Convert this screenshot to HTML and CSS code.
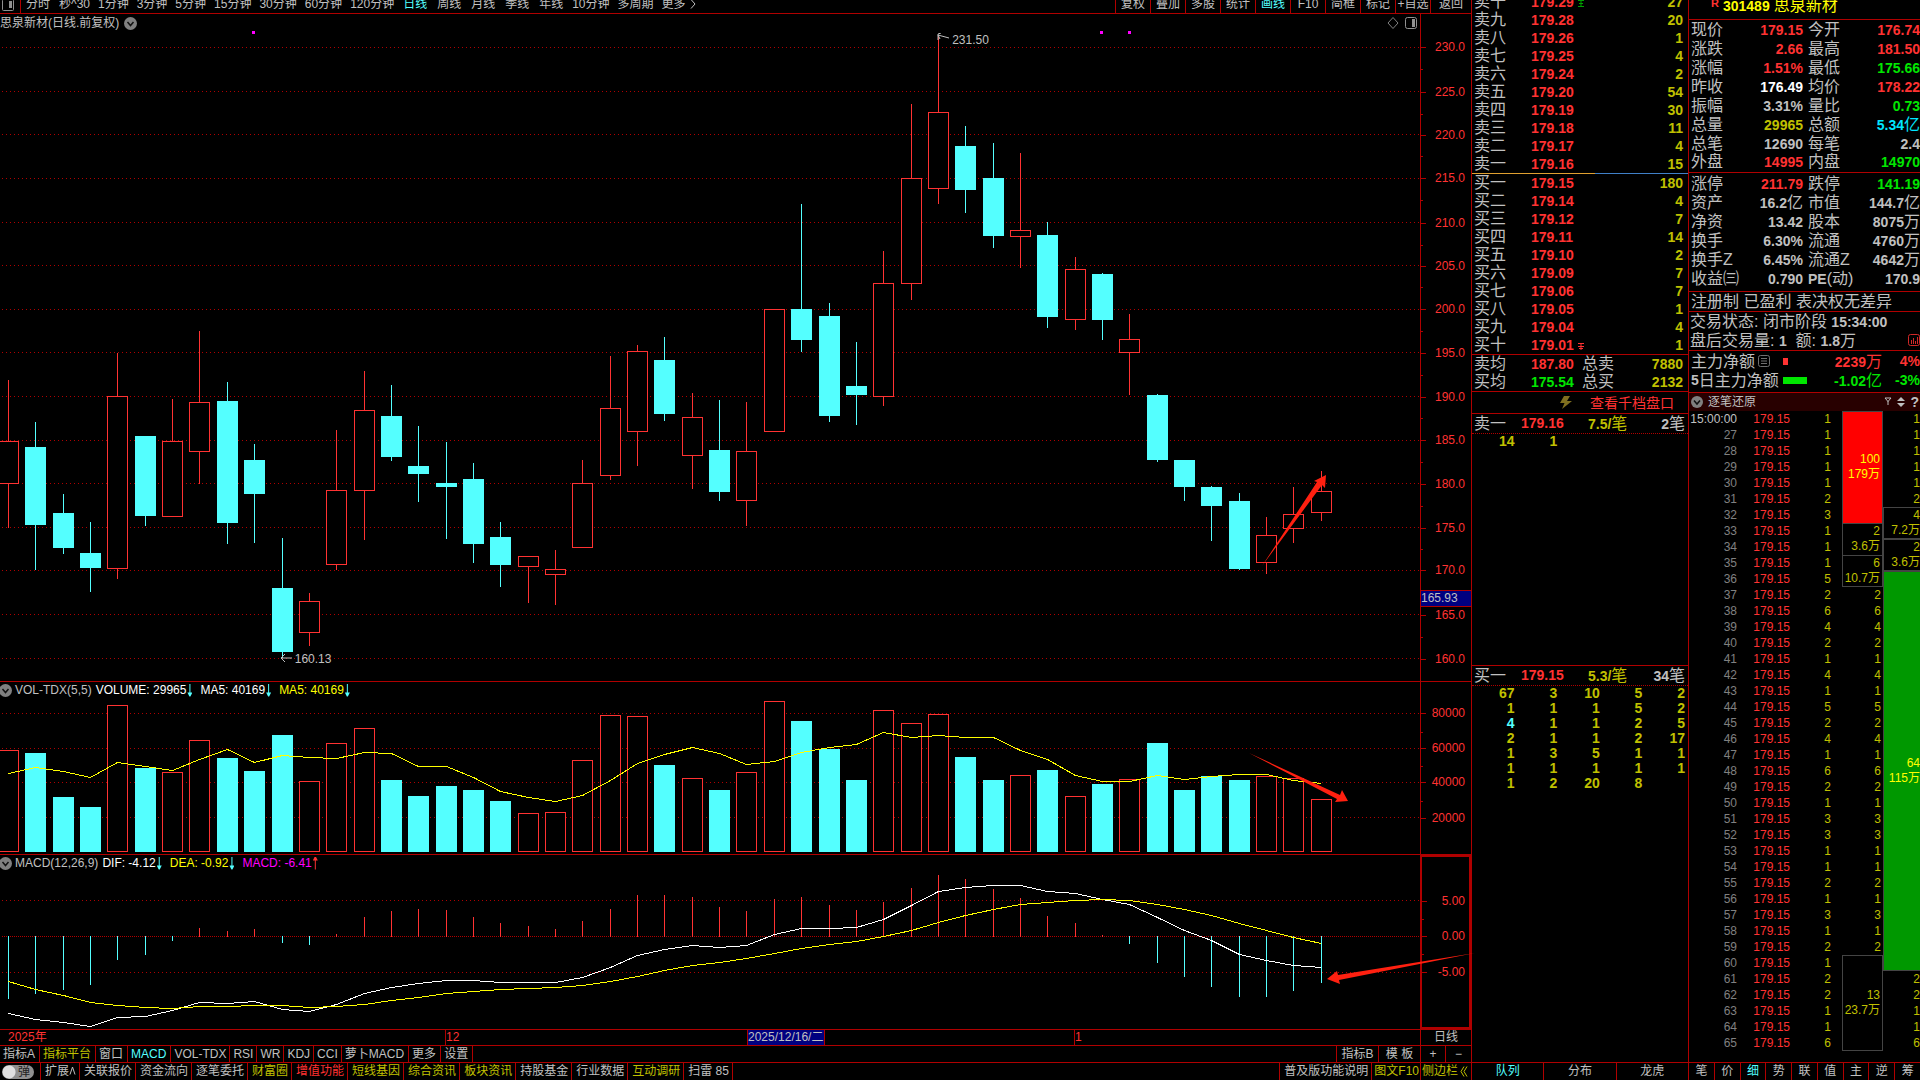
FILE: index.html
```html
<!DOCTYPE html>
<html lang="zh-CN">
<head>
<meta charset="utf-8">
<title>思泉新材 301489 日线</title>
<link rel="stylesheet" href="styles.css">
</head>
<body>
<main class="terminal">
  <section class="chart-area">
    <nav class="topbar">
      <button class="layout-btn" aria-label="布局"><svg width="12" height="12" viewBox="0 0 12 12"><rect x="0.5" y="0.5" width="11" height="11" rx="1" fill="none" stroke="#909090"/><rect x="7" y="2" width="3" height="7" fill="#909090"/></svg></button>
      <div class="periods">
        <button>分时</button><button>秒^30</button><button>1分钟</button><button>3分钟</button><button>5分钟</button><button>15分钟</button><button>30分钟</button><button>60分钟</button><button>120分钟</button><button class="cyan">日线</button><button>周线</button><button>月线</button><button>季线</button><button>年线</button><button>10分钟</button><button>多周期</button><button class="more">更多<svg width="6" height="10" viewBox="0 0 6 10"><path d="M1 0.500L5 5L1 9.500" fill="none" stroke="#c0c0c0"/></svg></button>
      </div>
      <div class="tools">
        <button>复权</button><button>叠加</button><button>多股</button><button>统计</button><button class="cyan">画线</button><button>F10</button><button>简框</button><button>标记</button><button>+自选</button><button class="back">返回</button>
      </div>
    </nav>

    <div class="charts">
      <section class="panel panel-price">
        <div class="plot">
          <svg class="draw" id="price" viewBox="0 14 1420 667" preserveAspectRatio="none"></svg>
          <header class="legend"><span>思泉新材(日线.前复权)</span><svg class="chev" width="13" height="13" viewBox="0 0 13 13"><circle cx="6.500" cy="6.500" r="6.500" fill="#808080"/><path d="M3.500 5L6.500 8.500L9.500 5" fill="none" stroke="#111" stroke-width="1.500"/></svg>
            <span class="corner"><svg width="12" height="12" viewBox="0 0 12 12"><path d="M6 0.500L11 6L6 11.500L1 6Z" fill="none" stroke="#808080"/></svg><svg width="12" height="12" viewBox="0 0 12 12"><rect x="0.500" y="0.500" width="11" height="11" rx="2" fill="none" stroke="#909090"/><rect x="7" y="2" width="3" height="8" fill="#909090"/></svg></span>
          </header>
          <span class="note note-high"><svg width="13" height="8" viewBox="0 0 13 8"><path d="M12 5L1 2M4 0L1 1V7M1 2L3 6" fill="none" stroke="#c0c0c0"/></svg>231.50</span>
          <span class="note note-low"><svg width="13" height="8" viewBox="0 0 13 8"><path d="M12 4H1M5 0L1 4L5 8" fill="none" stroke="#c0c0c0"/></svg>160.13</span>
        </div>
        <div class="axis" id="price-axis"><span class="price-tag">165.93</span></div>
      </section>
      <section class="panel panel-vol">
        <div class="plot">
          <svg class="draw" id="vol" viewBox="0 682 1420 172" preserveAspectRatio="none"></svg>
          <header class="legend sub"><svg class="chev" width="13" height="13" viewBox="0 0 13 13"><circle cx="6.500" cy="6.500" r="6.500" fill="#808080"/><path d="M3.500 5L6.500 8.500L9.500 5" fill="none" stroke="#111" stroke-width="1.500"/></svg><span class="name">VOL-TDX(5,5)</span><span class="white">VOLUME: 29965<i class="down"></i></span><span class="white">MA5: 40169<i class="down"></i></span><span class="yellow">MA5: 40169<i class="down"></i></span></header>
        </div>
        <div class="axis" id="vol-axis"></div>
      </section>
      <section class="panel panel-macd">
        <div class="plot">
          <svg class="draw" id="macd" viewBox="0 855 1420 174" preserveAspectRatio="none"></svg>
          <header class="legend sub"><svg class="chev" width="13" height="13" viewBox="0 0 13 13"><circle cx="6.500" cy="6.500" r="6.500" fill="#808080"/><path d="M3.500 5L6.500 8.500L9.500 5" fill="none" stroke="#111" stroke-width="1.500"/></svg><span class="name">MACD(12,26,9)</span><span class="white">DIF: -4.12<i class="down"></i></span><span class="yellow">DEA: -0.92<i class="down"></i></span><span class="magenta">MACD: -6.41<i class="up"></i></span></header>
        </div>
        <div class="axis framed" id="macd-axis"></div>
      </section>
      <svg class="arrows" viewBox="0 14 1471 1015" preserveAspectRatio="none">
        <path d="M1262 566L1317 482L1314 481L1326 475L1325 488L1322 485Z"/>
        <path d="M1249 753L1340 795L1342 790L1348 801L1335 802L1337 799Z"/>
        <path d="M1475 953L1338 975L1337 971L1327 979L1340 984L1339 980Z"/>
      </svg>
    </div>

    <div class="dates"><span class="d-year">2025年</span><span class="d-dec">12</span><span class="d-cur">2025/12/16/二</span><span class="d-gap"></span><span class="d-jan">1</span><button class="d-period">日线</button></div>

    <nav class="tabs indicators">
      <button>指标A</button><button class="gold">指标平台</button><button>窗口</button><button class="cyan">MACD</button><button class="latin">VOL-TDX</button><button class="latin">RSI</button><button class="latin">WR</button><button class="latin">KDJ</button><button class="latin">CCI</button><button>萝卜MACD</button><button>更多</button><button>设置</button>
      <span class="fill"></span><button class="wide">指标B</button><button class="wide">模 板</button><button class="zoom">+</button><button class="zoom last">−</button>
    </nav>
    <nav class="tabs footer">
      <label class="switch"><input type="checkbox" aria-label="弹"><span>弹</span></label>
      <button>扩展<svg class="caret" width="7" height="9" viewBox="0 0 7 9"><path d="M1 8.500L3.500 1L6 8.500" fill="none" stroke="#c0c0c0"/></svg></button><button>关联报价</button><button>资金流向</button><button>逐笔委托</button><button class="gold">财富圈</button><button class="red">增值功能</button><button class="gold">短线基因</button><button class="gold">综合资讯</button><button class="gold">板块资讯</button><button>持股基金</button><button>行业数据</button><button class="gold">互动调研</button><button>扫雷 85</button>
      <span class="fill"></span><button>普及版功能说明</button><button class="gold f10">图文F10</button><button class="gold side">侧边栏<svg width="8" height="11" viewBox="0 0 8 11"><path d="M4 0.500L1 5.500L4 10.500M7 0.500L4 5.500L7 10.500" fill="none" stroke="#c0c000"/></svg></button>
    </nav>
  </section>

  <section class="book">
    <div class="book-body">
      <table class="levels"><tbody id="asks"></tbody></table>
      <div class="ratio"></div>
      <table class="levels"><tbody id="bids"></tbody></table>
      <table class="levels avg">
        <tr><th>卖均</th><td class="px">187.80</td><td class="lbl">总卖</td><td class="qty">7880</td></tr>
        <tr><th>买均</th><td class="px green">175.54</td><td class="lbl">总买</td><td class="qty">2132</td></tr>
      </table>
      <div class="deep"><svg width="12" height="13" viewBox="0 0 12 13"><path d="M4 0H10L7 5H12L2 13L4.500 7H0Z" fill="#807020"/></svg><a href="#depth">查看千档盘口</a></div>
      <div class="queue queue-ask">
        <div class="q-head"><span>卖一</span><b class="red">179.16</b><span class="gold"><b>7.5/</b>笔</span><span class="cnt"><b>2</b>笔</span></div>
        <div class="q-grid"><b>14</b><b>1</b></div>
      </div>
      <div class="queue queue-bid">
        <div class="q-head"><span>买一</span><b class="red">179.15</b><span class="gold"><b>5.3/</b>笔</span><span class="cnt"><b>34</b>笔</span></div>
        <div class="q-grid" id="bid-queue"></div>
      </div>
    </div>
    <nav class="side-tabs"><button class="cyan">队列</button><button>分布</button><button>龙虎</button></nav>
  </section>

  <aside class="quote">
    <h1 class="stock"><sup>R</sup><b>301489</b><span>思泉新材</span></h1>
    <table class="info first-block"><tbody id="info1"></tbody></table>
    <table class="info second"><tbody id="info2"></tbody></table>
    <p class="flags">注册制 已盈利 表决权无差异</p>
    <div class="status">
      <p>交易状态: 闭市阶段 <b>15:34:00</b></p>
      <p class="after"><span>盘后交易量: <b>1</b> &nbsp;额: <b>1.8</b>万</span><svg width="12" height="12" viewBox="0 0 12 12"><rect x="0.500" y="0.500" width="11" height="11" rx="2" fill="none" stroke="#d02828"/><path d="M3.500 6V10M5.500 4V10M7.500 7V10M9.500 3V10" stroke="#d02828"/></svg></p>
    </div>
    <div class="flow">
      <div class="flow-row red"><span class="f-name">主力净额<svg width="12" height="12" viewBox="0 0 12 12"><rect x="0.500" y="0.500" width="11" height="11" rx="2" fill="none" stroke="#707070"/><path d="M3 3.500H9M3 6H9M3 8.500H9" stroke="#707070"/></svg></span><span class="f-bar"><i class="bar-in"></i></span><span class="f-val"><b>2239</b>万</span><b class="f-pct">4%</b></div>
      <div class="flow-row green"><span class="f-name"><b>5</b>日主力净额</span><span class="f-bar"><i class="bar-out"></i></span><span class="f-val"><b>-1.02</b>亿</span><b class="f-pct">-3%</b></div>
    </div>
    <header class="tick-head"><svg width="12" height="12" viewBox="0 0 12 12"><circle cx="6" cy="6" r="6" fill="#808080"/><path d="M3 4.500L6 8L9 4.500" fill="none" stroke="#111" stroke-width="1.500"/></svg><span>逐笔还原</span>
      <svg width="8" height="9" viewBox="0 0 8 9"><path d="M1 1H7L4 4.500ZM4 4V8" fill="none" stroke="#c0c0c0"/></svg>
      <svg width="8" height="10" viewBox="0 0 8 10"><path d="M0 4L4 0L8 4ZM0 6L4 10L8 6Z" fill="#c0c0c0"/></svg><b>?</b></header>
    <table class="ticks"><tbody id="ticks"></tbody></table>
    <nav class="side-tabs last-tabs"><button>笔</button><button>价</button><button class="cyan">细</button><button>势</button><button>联</button><button>值</button><button>主</button><button>逆</button><button>筹</button></nav>
  </aside>
</main>
<script src="app.js"></script>
</body>
</html>
```
FILE: styles.css
```css
* { box-sizing: border-box; margin: 0; padding: 0; }

:root {
  --line: #b00000;
  --red: #ff3232;
  --cyan: #54ffff;
  --gold: #c0c000;
  --green: #00e600;
  --text: #c0c0c0;
}

body {
  background: #000;
  color: var(--text);
  font: 12px/16px "Liberation Sans", "Noto Sans CJK SC", sans-serif;
  overflow: hidden;
}

button {
  background: none;
  border: 0;
  color: inherit;
  font: inherit;
  white-space: nowrap;
  cursor: pointer;
}

a { color: inherit; text-decoration: none; }
table { border-collapse: collapse; width: 100%; }
th { font-weight: 400; text-align: left; }

.red { color: var(--red); }
.cyan { color: var(--cyan); }
.gold { color: var(--gold); }
.green { color: var(--green); }
.white { color: #fff; }
.yellow { color: #ff0; }
.magenta { color: #f0f; }

.terminal {
  display: grid;
  grid-template-columns: minmax(0, 1fr) 217px 232px;
  height: 100vh;
}

/* left: chart column */
.chart-area { display: flex; flex-direction: column; min-width: 0; }

.topbar {
  display: flex;
  height: 14px;
  line-height: 8px;
  border-bottom: 1px solid var(--line);
}
.topbar button { line-height: 8px; height: 8px; }
.topbar .layout-btn { width: 20px; height: 13px; padding: 0 0 0 2px; text-align: left; }
.layout-btn svg { display: block; margin-top: -4px; }
.periods { display: flex; gap: 8px; flex: 1; border-left: 1px solid var(--line); padding-left: 4px; }
.periods button { min-width: 26px; }
.periods .more { display: flex; gap: 4px; align-items: center; }
.tools { display: flex; }
.topbar .tools button { width: 35px; height: 13px; padding-bottom: 5px; border-left: 1px solid var(--line); }
.topbar .tools .back { width: 41px; }

.charts { flex: 1; display: flex; flex-direction: column; position: relative; min-height: 0; }
.panel { display: flex; min-height: 0; }
.panel-price { flex: 667 1 0; }
.panel-vol { flex: 172 1 0; border-top: 1px solid var(--line); }
.panel-macd { flex: 174 1 0; border-top: 1px solid var(--line); }
.plot { flex: 1; position: relative; min-width: 0; }
.draw { position: absolute; inset: 0; width: 100%; height: 100%; display: block; shape-rendering: crispEdges; }
.arrows { position: absolute; inset: 0; width: 100%; height: 100%; overflow: visible; pointer-events: none; z-index: 2; fill: #ff2010; }

.legend { position: relative; display: flex; align-items: center; gap: 5px; height: 18px; }
.legend.sub { height: 16px; gap: 0; }
.sub .chev { margin-left: -1px; margin-right: 3px; }
.sub .name { margin-right: 4px; }
.sub .white, .sub .yellow, .sub .magenta { display: flex; align-items: center; margin-right: 8px; }
.corner { display: flex; gap: 6px; margin-left: auto; margin-right: 3px; }

.down, .up { width: 5px; height: 13px; margin-left: 1px; background: var(--cyan); clip-path: polygon(2px 0, 3px 0, 3px 9px, 5px 9px, 3px 13px, 2px 13px, 0 9px, 2px 9px); }
.up { background: var(--red); clip-path: polygon(2px 0, 3px 0, 5px 4px, 3px 4px, 3px 13px, 2px 13px, 2px 4px, 0 4px); }

.note { position: absolute; display: flex; gap: 2px; line-height: 12px; }
.note-high { left: 66%; top: 3%; }
.note-low { left: 19.700%; top: 95.800%; }
.note-high svg { margin-top: -1px; }
.note-low svg { margin-top: 1px; }

.axis { width: 51px; position: relative; border-left: 1px solid var(--line); color: var(--red); }
.axis.framed { border: 2px solid var(--line); }
.mark { position: absolute; left: 0; right: 6px; height: 16px; margin-top: -8px; text-align: right; }
.framed .mark { right: 4px; }
.mark::before { content: ""; position: absolute; left: 0; top: 8px; width: 5px; height: 1px; background: var(--line); }
.mark.minor::before { width: 2px; }
.price-tag { position: absolute; left: 0; right: 0; top: 86.400%; height: 17px; line-height: 15px; background: #000080; color: var(--text); border: solid var(--line); border-width: 1px 0; z-index: 1; }

.dates { display: flex; height: 16px; line-height: 15px; border-top: 1px solid var(--line); color: var(--red); }
.d-year { flex: 437 1 0; padding-left: 8px; }
.d-dec { flex: 301 1 0; border-left: 1px solid var(--line); }
.d-cur { flex: 76 1 0; white-space: nowrap; background: #000080; color: var(--text); border: solid var(--line); border-width: 0 1px; }
.d-gap { flex: 249 1 0; }
.d-jan { flex: 345 1 0; border-left: 1px solid var(--line); }
.d-period { flex: none; width: 51px; border-left: 1px solid var(--line); color: var(--text); line-height: 15px; }

.tabs { display: flex; height: 17px; border-top: 1px solid var(--line); }
.tabs button { line-height: 16px; padding: 0 4px 0 3px; border-right: 1px solid var(--line); }
.tabs .latin { padding: 0 3px; }
.fill { flex: 1; border-right: 1px solid var(--line); }
.tabs .wide { width: 42px; padding: 0; }
.tabs .zoom { width: 25px; padding: 0; }
.tabs .last { border-right: 0; }
.tabs.footer { height: 18px; }
.footer button { line-height: 17px; padding: 0 3px 0 4px; }
.footer .f10 { padding: 0 1px 0 2px; }
.footer .side { display: flex; align-items: center; gap: 2px; width: 50px; padding: 0 0 0 1px; border: 0; }
.switch { width: 41px; border-right: 1px solid var(--line); padding: 2px 0 0 2px; position: relative; line-height: 14px; }
.switch input { appearance: none; display: block; width: 32px; height: 14px; border-radius: 7px; background: radial-gradient(circle at 7px 7px, #e0e0e0 6px, #909090 7px); }
.switch span { position: absolute; left: 18px; top: 2px; color: #222; }

/* middle: order book */
.book, .quote { display: flex; flex-direction: column; border-left: 1px solid var(--line); min-height: 0; min-width: 0; overflow: hidden; font-size: 16px; line-height: 18px; }
.book b, .quote b { font-size: 14px; }
.book-body { flex: 1; display: flex; flex-direction: column; margin-top: -7px; }
.levels { table-layout: fixed; }
.levels tr { height: 18px; }
.levels th { width: 50px; padding-left: 2px; }
.levels td { font-size: 14px; font-weight: 700; white-space: nowrap; }
.levels .px { width: 60px; padding-left: 9px; color: var(--red); }
.levels .px.green { color: var(--green); }
.levels .lbl { width: 46px; font-size: 16px; font-weight: 400; }
.levels .qty { color: var(--gold); text-align: right; padding-right: 5px; }
.lim { display: inline-block; vertical-align: middle; margin-left: 4px; }
.ratio { height: 1px; background: linear-gradient(90deg, #e0a030 57%, #4080c8 57%); }
.avg { border-top: 1px solid var(--line); }
.deep { display: flex; align-items: center; justify-content: flex-end; gap: 18px; height: 22px; padding-right: 14px; border-top: 1px solid var(--line); color: var(--red); font-size: 14px; }
.queue { border-top: 1px solid var(--line); }
.queue-ask { flex: 252 1 0; }
.queue-bid { flex: 397 1 0; }
.q-head { display: grid; grid-template-columns: 47px 67px 1fr auto; height: 20px; line-height: 19px; padding: 0 3px 0 2px; border-bottom: 1px dotted var(--line); }
.q-grid { display: grid; grid-template-columns: repeat(5, 1fr); padding-right: 3px; line-height: 15px; grid-auto-rows: 15px; text-align: right; color: var(--gold); }
.side-tabs { display: flex; height: 18px; border-top: 1px solid var(--line); flex: none; font-size: 12px; }
.side-tabs button { flex: 1 1 0; line-height: 17px; border-right: 1px solid var(--line); min-width: 0; }
.side-tabs button:last-child { border-right: 0; }

/* right: quote */
.stock { height: 20px; flex: none; display: flex; gap: 4px; padding-left: 22px; line-height: 12px; font-size: 16px; font-weight: 400; color: #ff0; border-bottom: 1px solid var(--line); }
.stock sup { color: var(--red); font: 700 11px/7px "Liberation Sans", sans-serif; }
.info { table-layout: fixed; }
.info tr { height: 19px; }
.info th, .info td { line-height: 18px; white-space: nowrap; vertical-align: middle; }
.info b, .status b, .f-name b, .f-val b { line-height: 1; }
.info th { width: 48px; padding-left: 2px; }
.info td { text-align: right; }
.info .first { width: 66px; }
.info th.th2 { padding-left: 5px; }
.first-block { border-bottom: 1px solid var(--line); }
.second { margin: 2px 0; }
.info .w { color: #fff; }
.info .c { color: #00e6ff; }
.info .y { color: var(--gold); }
.flags { height: 20px; line-height: 19px; padding-left: 2px; border-top: 1px solid var(--line); white-space: nowrap; }
.status { height: 39px; line-height: 19px; padding-left: 1px; border-top: 1px solid var(--line); white-space: nowrap; }
.status .after { display: flex; align-items: center; justify-content: space-between; }
.flow { height: 42px; line-height: 19px; padding-top: 1px; border-top: 1px solid var(--line); }
.flow-row { display: grid; grid-template-columns: 94px 1fr 60px 38px; white-space: nowrap; align-items: center; height: 19px; }
.f-name { color: var(--text); padding-left: 2px; display: flex; align-items: center; gap: 3px; }
.flow-row:nth-child(2) .f-name { gap: 0; }
.f-bar i { display: block; height: 7px; background: currentColor; }
.bar-in { width: 5px; }
.bar-out { width: 24px; }
.f-val, .f-pct { text-align: right; }
.tick-head { display: flex; align-items: center; height: 19px; gap: 5px; padding: 0 1px 0 2px; background: #280000; border-top: 1px solid var(--line); font-size: 12px; }
.tick-head span { flex: 1; }
.ticks { flex: none; table-layout: fixed; font-size: 12px; border-collapse: separate; border-spacing: 0; }
.ticks tr { height: 16px; }
.ticks td { line-height: 16px; text-align: right; color: var(--gold); white-space: nowrap; }
.ticks .t { width: 48px; color: #808080; }
.ticks .t.full { color: var(--text); }
.ticks .p { width: 53px; color: var(--red); }
.ticks .n { width: 41px; }
.ticks .a { width: 52px; padding-right: 2px; }
.ticks .cell { padding: 0; }
.ticks .cell div { display: flex; flex-direction: column; justify-content: center; padding-right: 2px; line-height: 15px; border: solid #444; border-width: 1px 1px 0; margin-left: 11px; }
.ticks .b.cell div { margin-left: 0; padding-right: 0; border-width: 1px 0 1px 1px; }
.ticks .bottom div { border-bottom-width: 1px; }
.ticks .buy div { background: #f00; color: #ff0; }
.ticks .sell div { background: #009800; color: #ff0; }
.last-tabs { margin-top: auto; }
.quote .side-tabs button { padding: 0; }
```
FILE: app.js
```js
const $ = id => document.getElementById(id);
const RED = '#ff3232', CYAN = '#54ffff', GRID = '#b00000';
const STEP = 27.35;
const cx = i => Math.round(8 + STEP * i);

// kind, high, body top, body bottom, low
const candles = [
  ['r',380,441,483,528],['c',422,447,525,570],['c',494,513,548,554],['c',522,553,568,592],['r',353,396,568,579],
  ['c',436,436,516,526],['r',399,441,516,516],['r',331,402,451,484],['c',382,401,523,544],['c',444,460,494,543],
  ['c',538,588,652,658],['r',593,601,632,646],['r',430,490,564,570],['r',371,410,490,540],['c',385,416,457,461],
  ['c',426,466,474,502],['c',442,483,487,539],['c',463,479,544,563],['c',522,537,565,587],['r',556,556,566,603],
  ['r',550,569,574,605],['r',460,483,547,547],['r',356,408,475,480],['r',345,351,431,466],['c',337,360,414,421],
  ['r',393,417,455,489],['c',400,450,492,501],['r',402,451,500,526],['r',309,309,431,431],['c',204,309,340,352],
  ['c',303,316,416,422],['c',342,386,395,425],['r',251,283,396,406],['r',104,178,283,300],['r',36,112,188,204],
  ['c',126,146,190,213],['c',143,178,236,248],['r',153,230,236,268],['c',222,235,317,328],['r',257,269,319,330],
  ['c',273,274,320,340],['r',314,339,352,395],['c',394,395,460,462],['c',460,460,487,501],['c',486,487,506,541],
  ['c',493,501,569,570],['r',517,535,562,574],['r',487,514,528,543],['r',471,491,512,521]
];
const volume = [750,753,797,807,705,768,772,740,758,771,735,781,743,728,780,796,786,790,801,813,812,760,715,716,765,778,790,772,701,721,749,780,710,723,714,757,780,775,770,796,784,779,743,790,776,780,776,778,799];
const ma5 = [773,767,771,777,762,766,770,759,749,762,755,757,758,752,753,766,766,777,791,797,801,795,780,763,754,747,753,764,761,752,747,744,732,737,735,737,737,750,759,775,781,781,775,779,776,774,774,780,783];
const hist = [999,994,990,985,960,955,941,928,931,929,943,945,934,917,911,909,910,917,923,926,929,921,909,895,895,897,907,911,899,897,905,910,902,888,875,879,889,898,916,923,935,944,963,977,987,997,997,991,983];
const dif = [1013,1019,1022,1026,1017,1016,1010,1002,1003,1001,1009,1011,1004,993,987,983,980,980,982,982,982,977,967,955,949,945,947,945,934,928,928,927,919,905,891,887,885,885,891,893,899,904,917,930,940,954,960,965,967];
const dea = [981,989,995,1002,1005,1007,1008,1006,1006,1005,1005,1007,1006,1004,1000,997,993,991,989,988,987,985,981,976,970,965,962,958,953,948,944,941,936,930,922,915,909,904,902,900,899,900,904,909,915,923,930,937,943];

const vline = (x, a, b, c) => `<path d="M${x + .5} ${a}V${b}" stroke="${c}"/>`;
const hgrid = (y, gap = 3) => `<path d="M2 ${y + .5}H1420" stroke="${GRID}" stroke-dasharray="1 ${gap}"/>`;
const body = (kind, x, a, b) => kind === 'c'
  ? `<rect x="${x - 10}" y="${a}" width="21" height="${b - a}" fill="${CYAN}"/>`
  : `<rect x="${x - 9.5}" y="${a + .5}" width="20" height="${b - a}" fill="#000" stroke="${RED}"/>`;
const curve = (ys, c) => `<polyline points="${ys.map((y, i) => `${cx(i) + .5},${y + .5}`).join(' ')}" fill="none" stroke="${c}"/>`;

const priceYs = [47,91,134,178,222,265,309,352,396,440,483,527,570,614,658];
$('price').innerHTML = priceYs.map(y => hgrid(y)).join('')
  + candles.map(([k, h, t, b, l], i) => vline(cx(i), h, l, k === 'c' ? CYAN : RED) + body(k, cx(i), t, b)).join('')
  + [252, 1100, 1128].map(x => `<rect x="${x}" y="31" width="3" height="3" fill="#f0f"/>`).join('');
$('vol').innerHTML = [713,748,782,817].map(y => hgrid(y)).join('')
  + volume.map((y, i) => body(candles[i][0], cx(i), y, candles[i][0] === 'c' ? 852 : 851)).join('') + curve(ma5, '#ff0');
$('macd').innerHTML = hgrid(900) + hgrid(936, 1) + hgrid(972)
  + hist.map((y, i) => y > 936 ? vline(cx(i), 936, y, CYAN) : vline(cx(i), y, 937, RED)).join('')
  + curve(dif, '#fff') + curve(dea, '#ff0');

// axis marks, placed as a share of the panel height
function axis(id, ys, labels, top, height, minors) {
  const at = y => `style="top:${((y + .5 - top) / height * 100).toFixed(2)}%"`;
  $(id).insertAdjacentHTML('beforeend',
    ys.map((y, i) => `<span class="mark" ${at(y)}>${labels[i]}</span>`).join('')
    + minors.map(y => `<span class="mark minor" ${at(y)}></span>`).join(''));
}
const mids = ys => ys.slice(1).map((y, i) => Math.round((y + ys[i]) / 2));
axis('price-axis', priceYs, priceYs.map((_, i) => (230 - 5 * i).toFixed(1)), 14, 667, mids(priceYs));
axis('vol-axis', [713,748,782,817], ['80000','60000','40000','20000'], 682, 172, [731,765,800]);
axis('macd-axis', [900,936,972], ['5.00','0.00','-5.00'], 857, 170, [918,954]);

// order book
const cn = '一二三四五六七八九十';
const flag = (c, up) => `<svg class="lim" width="6" height="7" viewBox="0 0 6 7"><path d="${up ? 'M0 .5H6M3 0V6M0 6.500H6M1 3.500H5' : 'M0 .5H6M3 0V7M0 3.500H6M1 5.500H5'}" stroke="${c}"/></svg>`;
const level = (side, n, p, q, f = '') => `<tr><th>${side}${cn[n]}</th><td class="px">${p}${f}</td><td class="qty">${q}</td></tr>`;
const asks = [['179.29',27],['179.28',20],['179.26',1],['179.25',4],['179.24',2],['179.20',54],['179.19',30],['179.18',11],['179.17',4],['179.16',15]];
const bids = [['179.15',180],['179.14',4],['179.12',7],['179.11',14],['179.10',2],['179.09',7],['179.06',7],['179.05',1],['179.04',4],['179.01',1]];
$('asks').innerHTML = asks.map(([p, q], i) => level('卖', 9 - i, p, q, i ? '' : flag('#00a000', true))).join('');
$('bids').innerHTML = bids.map(([p, q], i) => level('买', i, p, q, i === 9 ? flag('#ff3232', false) : '')).join('');
const bq = [67,3,10,5,2, 1,1,1,5,2, 4,1,1,2,5, 2,1,1,2,17, 1,3,5,1,1, 1,1,1,1,1, 1,2,20,8];
$('bid-queue').innerHTML = bq.map((n, i) => `<b${i === 10 ? ' class="cyan"' : ''}>${n}</b>`).join('');

// quote table
const num = v => v.replace(/^[\d.%-]+/, '<b>$&</b>');
const row = ([a, v, c, d, w, e]) => `<tr><th>${a}</th><td class="first ${c}">${num(v)}</td><th class="th2">${d}</th><td class="${e}">${num(w)}</td></tr>`;
$('info1').innerHTML = [
  ['现价','179.15','red','今开','176.74','red'],['涨跌','2.66','red','最高','181.50','red'],
  ['涨幅','1.51%','red','最低','175.66','green'],['昨收','176.49','w','均价','178.22','red'],
  ['振幅','3.31%','','量比','0.73','green'],['总量','29965','y','总额','5.34亿','c'],
  ['总笔','12690','','每笔','2.4',''],['外盘','14995','red','内盘','14970','green']].map(row).join('');
$('info2').innerHTML = [
  ['涨停','211.79','red','跌停','141.19','green'],['资产','16.2亿','','市值','144.7亿',''],
  ['净资','13.42','','股本','8075万',''],['换手','6.30%','','流通','4760万',''],
  ['换手Z','6.45%','','流通Z','4642万',''],['收益㈢','0.790','','<b>PE</b>(动)','170.9','']].map(row).join('');

// trade-by-trade list: merged orders span several rows
const qty = [1,1,1,1,1,2,3,1,1,1,5,2,6,4,2,1,4,1,5,2,4,1,6,2,1,3,3,1,1,2,1,3,1,2,1,2,2,1,1,6];
const buys = { 26: [7,'100','179万','buy'], 33: [2,'2','3.6万',''], 35: [2,'6','10.7万','bottom'], 60: [6,'13','23.7万','bottom'] };
const sells = { 32: [2,'4','7.2万',''], 34: [2,'2','3.6万',''], 36: [25,'64','115万','sell'] };
function orderCell(map, r, cls, single) {
  const hit = map[r];
  if (hit) return `<td class="${cls} cell ${hit[3]}" rowspan="${hit[0]}"><div style="height:${hit[0] * 16}px"><span>${hit[1]}</span><span>${hit[2]}</span></div></td>`;
  const covered = Object.entries(map).some(([s, o]) => r > +s && r < +s + o[0]);
  return covered ? '' : `<td class="${cls}">${single}</td>`;
}
$('ticks').innerHTML = qty.map((n, i) => {
  const r = 26 + i;
  return `<tr><td class="t${i ? '' : ' full'}">${i ? r : '15:00:00'}</td><td class="p">179.15</td><td class="n">${n}</td>${orderCell(buys, r, 'a', n)}${orderCell(sells, r, 'b', n)}</tr>`;
}).join('');
```
